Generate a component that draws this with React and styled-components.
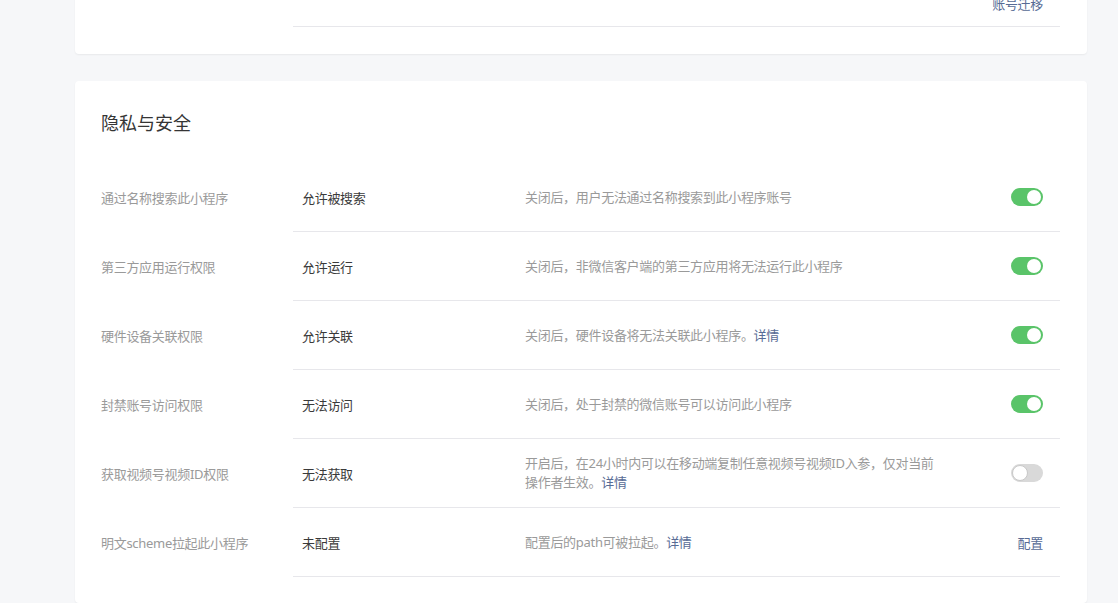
import styled, { createGlobalStyle } from 'styled-components';


const GlobalStyle = createGlobalStyle`
    html, body {
        margin: 0;
        padding: 0;
        background: #f6f7f9;
        overflow: hidden;
    }
    body {
        font-family: "Noto Sans", "Noto Sans CJK SC", sans-serif;
    }
`;

const Page = styled.div`
    display: flex;
    flex-direction: column;
    gap: 27px;
    padding: 0 31px 0 75px;
    margin-top: -70px;
`;

const Card = styled.div`
    background: #fff;
    border-radius: 4px;
    box-shadow: 0 1px 2px rgba(0, 0, 0, 0.06);
    padding: 28px 27px ${p => (p.$tail ? '27px' : '26px')} 26px;
`;

const Title = styled.h2`
    margin: 0 0 26px;
    font-size: 18px;
    line-height: 28px;
    font-weight: 400;
    color: #353535;
`;

const Row = styled.div`
    display: flex;
    align-items: stretch;
`;

const Label = styled.div`
    width: 192px;
    flex: none;
    display: flex;
    align-items: center;
    font-size: 13px;
    letter-spacing: -0.3px;
    color: #9a9a9a;
`;

const Content = styled.div`
    flex: 1;
    display: flex;
    align-items: ${p => (p.$bottom ? 'flex-end' : 'center')};
    min-height: 69px;
    padding: ${p => (p.$bottom ? '0 17px 13px 9px' : '0 17px 0 9px')};
    border-bottom: 1px solid #e7e7eb;
    box-sizing: border-box;
`;

const Value = styled.div`
    width: 223px;
    flex: none;
    font-size: 13px;
    letter-spacing: -0.3px;
    color: #3a3a3a;
`;

const Desc = styled.div`
    flex: 1;
    max-width: 414px;
    font-size: 13px;
    line-height: 19px;
    letter-spacing: -0.3px;
    color: #9a9a9a;
`;

const Action = styled.div`
    margin-left: auto;
    display: flex;
    align-items: center;
`;

const Link = styled.a`
    color: #576b95;
    text-decoration: none;
    font-size: 13px;
    letter-spacing: -0.3px;
    cursor: pointer;
`;

const Switch = styled.span`
    position: relative;
    display: block;
    width: 32px;
    height: 18px;
    border-radius: 9px;
    background: ${p => (p.$on ? '#5ac469' : '#d9d9d9')};

    &::after {
        content: '';
        position: absolute;
        top: ${p => (p.$on ? '2px' : '1px')};
        left: ${p => (p.$on ? '16px' : '1px')};
        width: 14px;
        height: 14px;
        border-radius: 50%;
        background: #fff;
        border: ${p => (p.$on ? 'none' : '1px solid #c8c8c8')};
    }
`;

const rows = [
    {
        label: '通过名称搜索此小程序',
        value: '允许被搜索',
        desc: '关闭后，用户无法通过名称搜索到此小程序账号',
        on: true,
    },
    {
        label: '第三方应用运行权限',
        value: '允许运行',
        desc: '关闭后，非微信客户端的第三方应用将无法运行此小程序',
        on: true,
    },
    {
        label: '硬件设备关联权限',
        value: '允许关联',
        desc: '关闭后，硬件设备将无法关联此小程序。',
        more: true,
        on: true,
    },
    {
        label: '封禁账号访问权限',
        value: '无法访问',
        desc: '关闭后，处于封禁的微信账号可以访问此小程序',
        on: true,
    },
    {
        label: '获取视频号视频ID权限',
        value: '无法获取',
        desc: '开启后，在24小时内可以在移动端复制任意视频号视频ID入参，仅对当前操作者生效。',
        more: true,
        on: false,
    },
    {
        label: '明文scheme拉起此小程序',
        value: '未配置',
        desc: '配置后的path可被拉起。',
        more: true,
        link: '配置',
    },
];


export default function App() {
    return (
        <>
            <GlobalStyle />
            <Page>
                <Card $tail>
                    <Row>
                        <Label />
                        <Content $bottom>
                            <Action>
                                <Link>账号迁移</Link>
                            </Action>
                        </Content>
                    </Row>
                </Card>

                <Card>
                    <Title>隐私与安全</Title>
                    {rows.map(r => (
                        <Row key={r.label}>
                            <Label>{r.label}</Label>
                            <Content>
                                <Value>{r.value}</Value>
                                <Desc>
                                    {r.desc}
                                    {r.more && <Link>详情</Link>}
                                </Desc>
                                <Action>
                                    {r.link
                                        ? <Link>{r.link}</Link>
                                        : <Switch $on={r.on} />}
                                </Action>
                            </Content>
                        </Row>
                    ))}
                </Card>
            </Page>
        </>
    )
}
